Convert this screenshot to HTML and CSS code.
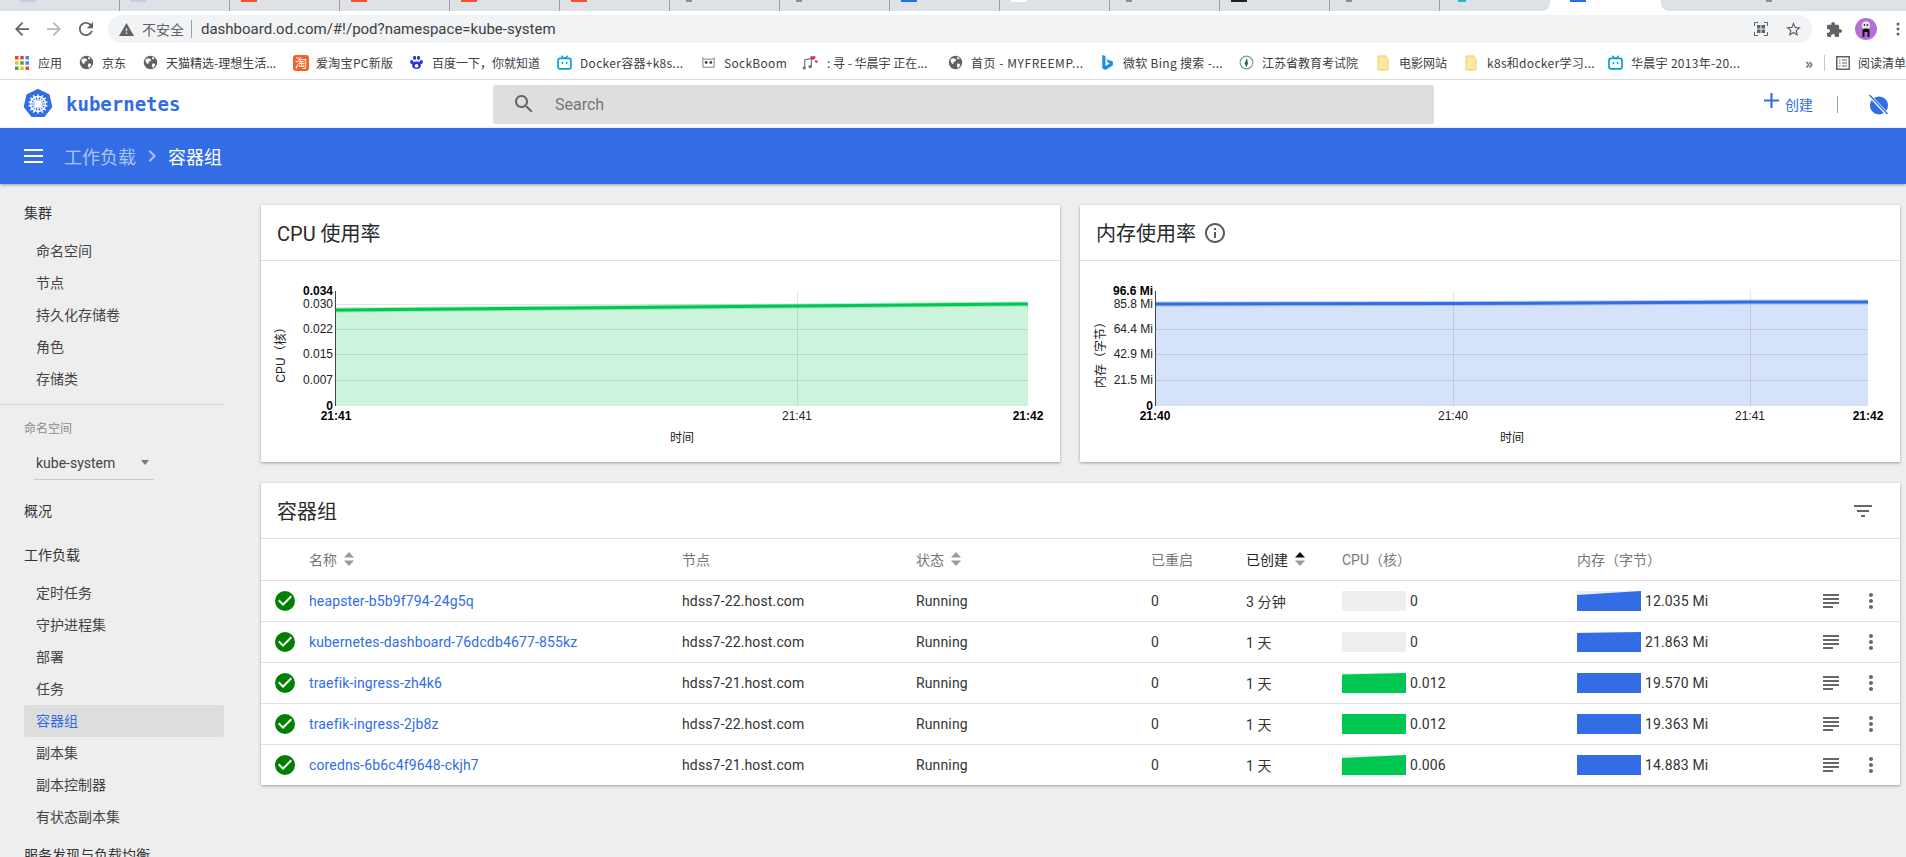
FILE: index.html
```html
<!DOCTYPE html>
<html lang="zh-CN">
<head>
<meta charset="utf-8">
<title>容器组 - Kubernetes Dashboard</title>
<link rel="stylesheet" href="styles.css">
</head>
<body>
<svg class="defs" aria-hidden="true">
  <symbol id="i-globe" viewBox="0 0 16 16"><circle cx="8" cy="8" r="7.2" fill="#5f6368"/><path d="M3 4.2l3-.8 2.6 1-.6 2.2-2 .6-.2 2.4-1.4-.4-1.8-2.6zM9.6 9l2.8.2.8 1.4-1.8 3-1.6-.6z" fill="#fff"/><path d="M10 1.8l2.4 1.6-1.6 1.4-1.2-1z" fill="#fff"/></symbol>
  <symbol id="i-bili" viewBox="0 0 18 18"><path d="M5 1l3 2.6h2L13 1" fill="none" stroke="#00a1d6" stroke-width="1.5"/><rect x="1.2" y="4" width="15.6" height="12.6" rx="2.6" fill="none" stroke="#00a1d6" stroke-width="2"/><rect x="4" y="6.600" width="10" height="7.400" rx=".8" fill="#fff"/><rect x="5.600" y="8.400" width="1.800" height="2.600" fill="#00a1d6"/><rect x="10.600" y="8.400" width="1.800" height="2.600" fill="#00a1d6"/></symbol>
  <symbol id="i-folder" viewBox="0 0 12 16"><path d="M1 1h7.6L11 3.4V15H1z" fill="#fce8a3" stroke="#f2cd5f"/></symbol>
  <symbol id="i-log" viewBox="0 0 24 24"><path d="M14 17H4v2h10v-2zm6-8H4v2h16V9zM4 15h16v-2H4v2zM4 5v2h16V5H4z"/></symbol>
  <symbol id="i-more" viewBox="0 0 24 24"><path d="M12 8c1.1 0 2-.9 2-2s-.9-2-2-2-2 .9-2 2 .9 2 2 2zm0 2c-1.1 0-2 .9-2 2s.9 2 2 2 2-.9 2-2-.9-2-2-2zm0 6c-1.1 0-2 .9-2 2s.9 2 2 2 2-.9 2-2-.9-2-2-2z"/></symbol>
  <symbol id="i-ok" viewBox="0 0 24 24"><circle cx="12" cy="12" r="10" fill="#008000"/><path d="M10 17l-5-5 1.41-1.41L10 14.17l7.59-7.59L19 8z" fill="#fff"/></symbol>
  <symbol id="i-sort" viewBox="0 0 10 14"><path class="sort-up" d="M5 0l5 5.5H0z"/><path class="sort-down" d="M5 14L0 8.500h10z"/></symbol>
</svg>

<div class="page">
  <div class="tabstrip">
    <div class="tab tab-first"><i class="fav fav-lav"></i></div>
    <div class="tab"><i class="fav fav-lav"></i></div>
    <div class="tab"><i class="fav fav-red"></i></div>
    <div class="tab"><i class="fav fav-red"></i></div>
    <div class="tab"><i class="fav fav-red"></i></div>
    <div class="tab"><i class="fav fav-red"></i></div>
    <div class="tab"><i class="fav fav-gray"></i></div>
    <div class="tab"><i class="fav fav-gray"></i></div>
    <div class="tab"><i class="fav fav-blue"></i></div>
    <div class="tab"><i class="fav fav-white"></i></div>
    <div class="tab"><i class="fav fav-gray"></i></div>
    <div class="tab"><i class="fav fav-black"></i></div>
    <div class="tab"><i class="fav fav-gray"></i></div>
    <div class="tab tab-before-active"><i class="fav fav-teal"></i></div>
    <div class="tab-active"><i class="fav fav-blue"></i></div>
    <div class="tab-last"><i class="fav fav-gray"></i></div>
  </div>

  <div class="toolbar">
    <svg class="tb-icon tb-back" viewBox="4 4 16 16"><path d="M20 11H7.830l5.590-5.590L12 4l-8 8 8 8 1.410-1.410L7.830 13H20v-2z"/></svg>
    <svg class="tb-icon tb-forward" viewBox="4 4 16 16"><path d="M12 4l-1.410 1.410L16.170 11H4v2h12.170l-5.580 5.590L12 20l8-8z"/></svg>
    <svg class="tb-icon tb-reload" viewBox="4 4 16 16"><path d="M17.650 6.350C16.200 4.900 14.210 4 12 4c-4.420 0-7.990 3.580-7.990 8s3.570 8 7.990 8c3.730 0 6.840-2.550 7.730-6h-2.080c-.82 2.330-3.040 4-5.650 4-3.310 0-6-2.690-6-6s2.690-6 6-6c1.660 0 3.140.69 4.220 1.780L13 11h7V4l-2.350 2.350z"/></svg>
    <div class="omnibox">
      <svg class="omni-warn" viewBox="1 2 22 19"><path d="M1 21h22L12 2 1 21zm12-3h-2v-2h2v2zm0-4h-2v-4h2v4z"/></svg>
      <span class="omni-state">不安全</span>
      <span class="omni-url">dashboard.od.com/#!/pod?namespace=kube-system</span>
      <svg class="omni-qr" viewBox="0 0 14 14"><path d="M.5 4V.5H4M10 .5h3.500V4M13.500 10v3.500H10M4 13.500H.5V10" fill="none" stroke="#5f6368"/><path d="M3 3h3.500v3.500H3zM7.500 3H11v3.500H7.500zM3 7.500h3.500V11H3zM7.500 7.500H11V11H7.500z" fill="#5f6368"/></svg>
      <svg class="omni-star" viewBox="2 2 20 19"><path d="M22 9.240l-7.190-.62L12 2 9.190 8.630 2 9.240l5.460 4.730L5.820 21 12 17.270 18.180 21l-1.630-7.030L22 9.240zM12 15.400l-3.760 2.270 1-4.280-3.320-2.880 4.380-.38L12 6.100l1.710 4.040 4.380.38-3.320 2.880 1 4.280L12 15.400z"/></svg>
    </div>
    <svg class="tb-puzzle" viewBox="2 1 21 21"><path d="M20.500 11H19V7c0-1.100-.9-2-2-2h-4V3.500C13 2.120 11.880 1 10.500 1S8 2.120 8 3.500V5H4c-1.100 0-1.990.9-1.990 2v3.800H3.500c1.490 0 2.700 1.210 2.700 2.700s-1.210 2.700-2.700 2.700H2V20c0 1.100.9 2 2 2h3.800v-1.500c0-1.490 1.210-2.700 2.700-2.700 1.490 0 2.700 1.210 2.700 2.700V22H17c1.100 0 2-.9 2-2v-4h1.500c1.380 0 2.500-1.120 2.500-2.500S21.880 11 20.500 11z"/></svg>
    <svg class="tb-avatar" viewBox="0 0 22 22"><circle cx="11" cy="11" r="11" fill="#b56fd8"/><circle cx="11" cy="7.500" r="4.200" fill="#e8e8e8"/><circle cx="9.500" cy="7" r=".9" fill="#333"/><circle cx="12.500" cy="7" r=".9" fill="#333"/><path d="M7.500 19v-6.500c0-1.500 1.500-2 3.500-2s3.500.5 3.500 2V19h-2v-5h-3v5z" fill="#111"/></svg>
    <svg class="tb-dots" viewBox="0 0 4 14"><circle cx="2" cy="2" r="1.500"/><circle cx="2" cy="7" r="1.500"/><circle cx="2" cy="12" r="1.500"/></svg>
  </div>

  <div class="bookmarks">
    <span class="bm bm-apps">
      <svg class="bm-ico bm-grid" viewBox="0 0 14 14"><rect width="3.500" height="3.500" fill="#ea4335"/><rect x="5.250" width="3.500" height="3.500" fill="#ea4335"/><rect x="10.500" width="3.500" height="3.500" fill="#4285f4"/><rect y="5.250" width="3.500" height="3.500" fill="#fbbc05"/><rect x="5.250" y="5.250" width="3.500" height="3.500" fill="#34a853"/><rect x="10.500" y="5.250" width="3.500" height="3.500" fill="#4285f4"/><rect y="10.500" width="3.500" height="3.500" fill="#34a853"/><rect x="5.250" y="10.500" width="3.500" height="3.500" fill="#fbbc05"/><rect x="10.500" y="10.500" width="3.500" height="3.500" fill="#ea4335"/></svg>应用</span>
    <span class="bm bm-w1"><svg class="bm-ico"><use href="#i-globe"/></svg>京东</span>
    <span class="bm bm-w2"><svg class="bm-ico"><use href="#i-globe"/></svg>天猫精选-理想生活...</span>
    <span class="bm bm-w3 bm-wide"><span class="bm-tao">淘</span>爱淘宝PC新版</span>
    <span class="bm bm-w4"><svg class="bm-ico" viewBox="0 0 16 16"><ellipse cx="8" cy="11" rx="4.600" ry="4" fill="#2932e1"/><ellipse cx="3" cy="7.500" rx="1.800" ry="2.300" fill="#2932e1"/><ellipse cx="13" cy="7.500" rx="1.800" ry="2.300" fill="#2932e1"/><ellipse cx="6" cy="3" rx="1.700" ry="2.300" fill="#2932e1"/><ellipse cx="10.200" cy="3" rx="1.700" ry="2.300" fill="#2932e1"/><circle cx="8" cy="11.500" r="2" fill="#fff"/></svg>百度一下，你就知道</span>
    <span class="bm bm-w5 bm-wide"><svg class="bm-ico"><use href="#i-bili"/></svg>Docker容器+k8s...</span>
    <span class="bm bm-w6 bm-wide"><svg class="bm-ico" viewBox="0 0 16 16"><path d="M2 3l2 1.500h8L14 3v10H2z" fill="#fff" stroke="#777"/><circle cx="5.500" cy="8" r="1.500" fill="#444"/><circle cx="10.500" cy="8" r="1.500" fill="#444"/></svg>SockBoom</span>
    <span class="bm bm-w7"><svg class="bm-ico bm-music" viewBox="0 0 20 18"><path d="M3 16V6l8-2v10" fill="none" stroke="#777" stroke-width="1.400"/><circle cx="2.500" cy="15.500" r="2" fill="#777"/><circle cx="9.500" cy="14" r="2" fill="#777"/><path d="M13 2c.6-1.400 3-1.200 3 .6 0 1.400-1.800 2.400-3 3.400-1.200-1-3-2-3-3.400 0-1.800 2.400-2 3-.6zM17 7c.4-.8 2-.7 2 .4 0 .9-1.200 1.500-2 2.100-.8-.6-2-1.200-2-2.100 0-1.100 1.600-1.200 2-.4z" fill="#d6247c"/></svg>: 寻 - 华晨宇 正在...</span>
    <span class="bm bm-w8 bm-wider"><svg class="bm-ico"><use href="#i-globe"/></svg>首页 - MYFREEMP...</span>
    <span class="bm bm-w9 bm-wide"><svg class="bm-ico bm-bing" viewBox="0 0 12 18"><path d="M1 1l3.400 1.200v10.600l4.600-2.700-2.300-1.100-1.300-3.400 6.800 2.400v3.800L4.400 17 1 15z" fill="#1b8fe8"/></svg>微软 Bing 搜索 -...</span>
    <span class="bm bm-w10"><svg class="bm-ico" viewBox="0 0 16 16"><circle cx="8" cy="8" r="6.800" fill="#fff" stroke="#7a9c8c" stroke-width="1.200"/><path d="M8.500 3L6 9l2 4 1.500-4z" fill="#1e6b3a"/></svg>江苏省教育考试院</span>
    <span class="bm bm-w11"><svg class="bm-ico bm-folder"><use href="#i-folder"/></svg>电影网站</span>
    <span class="bm bm-w12 bm-wide"><svg class="bm-ico bm-folder"><use href="#i-folder"/></svg>k8s和docker学习...</span>
    <span class="bm bm-w13 bm-wide"><svg class="bm-ico"><use href="#i-bili"/></svg>华晨宇 2013年-20...</span>
    <span class="bm-more">»</span>
    <span class="bm-sep"></span>
    <span class="bm bm-read"><svg class="bm-ico" viewBox="0 0 14 14"><rect x=".75" y=".75" width="12.500" height="12.500" fill="none" stroke="#5f6368" stroke-width="1.500"/><path d="M3 4h1.500M6 4h5M3 7h1.500M6 7h5M3 10h1.500M6 10h5" stroke="#5f6368" stroke-width="1.200"/></svg>阅读清单</span>
  </div>

  <header class="app-header">
    <div class="brand">
      <svg class="brand-logo" viewBox="0 0 32 32">
        <path d="M16 .8l11.600 5.600 2.900 12.600-8 10.100H9.500l-8-10.100L4.400 6.400z" fill="#326de6" stroke="#326de6" stroke-width="1.500" stroke-linejoin="round"/>
        <g fill="none" stroke="#fff" stroke-width="1.500">
          <circle cx="16" cy="16" r="8"/>
          <path d="M16 5.500v21M7.800 9.500l16.400 13M5.800 18.300l20.400-4.600M10.900 25.300l10.200-18.600M21.100 25.300L10.900 6.700M26.200 18.300L5.800 13.700M24.200 9.500L7.800 22.500"/>
        </g>
        <circle cx="16" cy="16" r="2.400" fill="#fff"/>
      </svg>
      <span class="brand-name">kubernetes</span>
    </div>
    <div class="search">
      <svg class="search-icon" viewBox="3 3 18 18"><path d="M15.500 14h-.79l-.28-.27C15.410 12.590 16 11.110 16 9.500 16 5.910 13.090 3 9.500 3S3 5.910 3 9.500 5.910 16 9.500 16c1.610 0 3.090-.59 4.230-1.570l.27.28v.79l5 4.990L20.490 19l-4.990-5zm-6 0C7.010 14 5 11.990 5 9.500S7.010 5 9.500 5 14 7.010 14 9.500 11.990 14 9.500 14z"/></svg>
      <span class="search-text">Search</span>
    </div>
    <div class="header-actions">
      <svg class="plus" viewBox="5 5 14 14"><path d="M19 13h-6v6h-2v-6H5v-2h6V5h2v6h6v2z"/></svg>
      <span class="create">创建</span>
      <span class="action-sep"></span>
      <svg class="user-off" viewBox="0 0 22 22"><circle cx="11.500" cy="12" r="9.500" fill="#326de6"/><path d="M3 3l17 18" stroke="#fff" stroke-width="3.500"/><path d="M1.500 1l19 20" stroke="#326de6" stroke-width="1.400"/></svg>
    </div>
  </header>

  <div class="appbar">
    <svg class="menu" viewBox="0 0 19 14"><path d="M0 0h19v2H0zM0 6h19v2H0zM0 12h19v2H0z"/></svg>
    <span class="crumb">工作负载</span>
    <svg class="crumb-sep" viewBox="8 6 8 12"><path d="M10 6L8.590 7.410 13.170 12l-4.580 4.590L10 18l6-6z"/></svg>
    <span class="crumb-now">容器组</span>
  </div>

  <div class="workspace">
    <nav class="sidebar">
      <div class="nav-title nav-title-group">集群</div>
      <a class="nav-item">命名空间</a>
      <a class="nav-item">节点</a>
      <a class="nav-item">持久化存储卷</a>
      <a class="nav-item">角色</a>
      <a class="nav-item">存储类</a>
      <div class="nav-divider"></div>
      <div class="nav-label">命名空间</div>
      <div class="ns-select"><span>kube-system</span><i class="ns-arrow"></i></div>
      <div class="nav-title nav-title-overview">概况</div>
      <div class="nav-title nav-title-workload">工作负载</div>
      <a class="nav-item">定时任务</a>
      <a class="nav-item">守护进程集</a>
      <a class="nav-item">部署</a>
      <a class="nav-item">任务</a>
      <a class="nav-item nav-item-active">容器组</a>
      <a class="nav-item">副本集</a>
      <a class="nav-item">副本控制器</a>
      <a class="nav-item">有状态副本集</a>
      <div class="nav-title nav-title-service">服务发现与负载均衡</div>
    </nav>

    <main class="content">
      <section class="card card-chart">
        <div class="card-head"><h2 class="card-title">CPU 使用率</h2></div>
        <svg class="chart" width="799" height="201" viewBox="0 0 799 201">
          <polygon class="area-green" points="75,49 536,45 767,43 767,145 75,145"/>
          <path class="grid" d="M75 43.500H767M75 68.500H767M75 93.500H767M75 119.500H767M536.500 30V145"/>
          <polyline class="line-halo-green" points="75,49 536,45 767,43"/>
          <polyline class="line-green" points="75,49 536,45 767,43"/>
          <path class="axis" d="M74.500 30V145"/>
          <text class="tick-y tick-strong" x="72" y="34">0.034</text>
          <text class="tick-y" x="72" y="47">0.030</text>
          <text class="tick-y" x="72" y="72">0.022</text>
          <text class="tick-y" x="72" y="97">0.015</text>
          <text class="tick-y" x="72" y="123">0.007</text>
          <text class="tick-y tick-strong" x="72" y="149">0</text>
          <text class="tick-x tick-strong" x="75" y="159">21:41</text>
          <text class="tick-x" x="536" y="159">21:41</text>
          <text class="tick-x tick-strong" x="767" y="159">21:42</text>
          <text class="axis-label" x="421" y="181">时间</text>
          <text class="axis-label" transform="translate(24 91) rotate(-90)">CPU（核）</text>
        </svg>
      </section>

      <section class="card card-chart">
        <div class="card-head"><h2 class="card-title">内存使用率</h2>
          <svg class="info" viewBox="0 0 24 24"><path d="M11 7h2v2h-2zm0 4h2v6h-2zm1-9C6.480 2 2 6.480 2 12s4.480 10 10 10 10-4.480 10-10S17.520 2 12 2zm0 18c-4.410 0-8-3.590-8-8s3.590-8 8-8 8 3.590 8 8-3.590 8-8 8z"/></svg>
        </div>
        <svg class="chart" width="820" height="201" viewBox="0 0 820 201">
          <polygon class="area-blue" points="76,43 373,42.500 670,41 788,41 788,145 76,145"/>
          <path class="grid" d="M76 68.500H788M76 93.500H788M76 119.500H788M373.500 30V145M670.500 30V145"/>
          <polyline class="line-halo-blue" points="76,43 373,42.500 670,41 788,41"/>
          <polyline class="line-blue" points="76,43 373,42.500 670,41 788,41"/>
          <path class="axis" d="M75.500 30V145"/>
          <text class="tick-y tick-strong" x="73" y="34">96.6 Mi</text>
          <text class="tick-y" x="73" y="47">85.8 Mi</text>
          <text class="tick-y" x="73" y="72">64.4 Mi</text>
          <text class="tick-y" x="73" y="97">42.9 Mi</text>
          <text class="tick-y" x="73" y="123">21.5 Mi</text>
          <text class="tick-y tick-strong" x="73" y="149">0</text>
          <text class="tick-x tick-strong" x="75" y="159">21:40</text>
          <text class="tick-x" x="373" y="159">21:40</text>
          <text class="tick-x" x="670" y="159">21:41</text>
          <text class="tick-x tick-strong" x="788" y="159">21:42</text>
          <text class="axis-label" x="432" y="181">时间</text>
          <text class="axis-label" transform="translate(25 91) rotate(-90)">内存（字节）</text>
        </svg>
      </section>

      <section class="card card-table">
        <div class="card-head card-head-table">
          <h2 class="card-title">容器组</h2>
          <svg class="filter" viewBox="0 0 24 24"><path d="M10 18h4v-2h-4v2zM3 6v2h18V6H3zm3 7h12v-2H6v2z"/></svg>
        </div>
        <table class="pods">
          <colgroup>
            <col class="c-check"><col class="c-name"><col class="c-node"><col class="c-status"><col class="c-restart"><col class="c-created"><col class="c-cpu"><col class="c-mem"><col class="c-log"><col class="c-more">
          </colgroup>
          <thead>
            <tr>
              <th></th>
              <th><span class="th-sort">名称<svg class="sort"><use href="#i-sort"/></svg></span></th>
              <th>节点</th>
              <th><span class="th-sort">状态<svg class="sort"><use href="#i-sort"/></svg></span></th>
              <th>已重启</th>
              <th class="th-active"><span class="th-sort">已创建<svg class="sort sort-active"><use href="#i-sort"/></svg></span></th>
              <th>CPU（核）</th>
              <th>内存（字节）</th>
              <th></th>
              <th></th>
            </tr>
          </thead>
          <tbody>
            <tr>
              <td><svg class="ok"><use href="#i-ok"/></svg></td>
              <td><a class="pod-link">heapster-b5b9f794-24g5q</a></td>
              <td>hdss7-22.host.com</td><td>Running</td><td>0</td><td>3 分钟</td>
              <td><div class="metric"><svg class="spark" viewBox="0 0 64 20"></svg>0</div></td>
              <td><div class="metric"><svg class="spark" viewBox="0 0 64 20"><polygon class="spark-blue" points="0,4 64,0 64,20 0,20"/></svg>12.035 Mi</div></td>
              <td><svg class="act"><use href="#i-log"/></svg></td><td><svg class="act"><use href="#i-more"/></svg></td>
            </tr>
            <tr>
              <td><svg class="ok"><use href="#i-ok"/></svg></td>
              <td><a class="pod-link">kubernetes-dashboard-76dcdb4677-855kz</a></td>
              <td>hdss7-22.host.com</td><td>Running</td><td>0</td><td class="age-old">1 天</td>
              <td><div class="metric"><svg class="spark" viewBox="0 0 64 20"></svg>0</div></td>
              <td><div class="metric"><svg class="spark" viewBox="0 0 64 20"><polygon class="spark-blue" points="0,1 64,0 64,20 0,20"/></svg>21.863 Mi</div></td>
              <td><svg class="act"><use href="#i-log"/></svg></td><td><svg class="act"><use href="#i-more"/></svg></td>
            </tr>
            <tr>
              <td><svg class="ok"><use href="#i-ok"/></svg></td>
              <td><a class="pod-link">traefik-ingress-zh4k6</a></td>
              <td>hdss7-21.host.com</td><td>Running</td><td>0</td><td class="age-old">1 天</td>
              <td><div class="metric"><svg class="spark" viewBox="0 0 64 20"><polygon class="spark-green" points="0,1.500 64,0 64,20 0,20"/></svg>0.012</div></td>
              <td><div class="metric"><svg class="spark" viewBox="0 0 64 20"><polygon class="spark-blue" points="0,0 64,0 64,20 0,20"/></svg>19.570 Mi</div></td>
              <td><svg class="act"><use href="#i-log"/></svg></td><td><svg class="act"><use href="#i-more"/></svg></td>
            </tr>
            <tr>
              <td><svg class="ok"><use href="#i-ok"/></svg></td>
              <td><a class="pod-link">traefik-ingress-2jb8z</a></td>
              <td>hdss7-22.host.com</td><td>Running</td><td>0</td><td class="age-old">1 天</td>
              <td><div class="metric"><svg class="spark" viewBox="0 0 64 20"><polygon class="spark-green" points="0,0 64,0 64,20 0,20"/></svg>0.012</div></td>
              <td><div class="metric"><svg class="spark" viewBox="0 0 64 20"><polygon class="spark-blue" points="0,0 64,0 64,20 0,20"/></svg>19.363 Mi</div></td>
              <td><svg class="act"><use href="#i-log"/></svg></td><td><svg class="act"><use href="#i-more"/></svg></td>
            </tr>
            <tr>
              <td><svg class="ok"><use href="#i-ok"/></svg></td>
              <td><a class="pod-link">coredns-6b6c4f9648-ckjh7</a></td>
              <td>hdss7-21.host.com</td><td>Running</td><td>0</td><td class="age-old">1 天</td>
              <td><div class="metric"><svg class="spark" viewBox="0 0 64 20"><polygon class="spark-green" points="0,3 64,0 64,20 0,20"/></svg>0.006</div></td>
              <td><div class="metric"><svg class="spark" viewBox="0 0 64 20"><polygon class="spark-blue" points="0,0 64,0 64,20 0,20"/></svg>14.883 Mi</div></td>
              <td><svg class="act"><use href="#i-log"/></svg></td><td><svg class="act"><use href="#i-more"/></svg></td>
            </tr>
          </tbody>
        </table>
      </section>
    </main>
  </div>
</div>
</body>
</html>
```
FILE: styles.css
```css
* { box-sizing: border-box; }
html, body { margin: 0; height: 100%; overflow: hidden; }
body { font-family: Roboto, "Noto Sans CJK SC", sans-serif; color: #333; background: #eee; }
.defs { position: absolute; width: 0; height: 0; }
.page { height: 857px; display: flex; flex-direction: column; overflow: hidden; }

/* browser tab strip */
.tabstrip { height: 11px; flex: none; display: flex; background: #fff; overflow: hidden; }
.tab { width: 110px; flex: none; background: #dee1e6; border-right: 1px solid #9aa0a6; padding-left: 11px; }
.tab-first { width: 120px; padding-left: 20px; }
.tab-before-active { border-right: 0; border-bottom-right-radius: 8px; width: 110px; padding-left: 18px; }
.tab-active { width: 111px; flex: none; background: #fff; padding-left: 20px; }
.tab-last { flex: 1; background: #dee1e6; border-bottom-left-radius: 8px; padding-left: 100px; }
.fav { display: block; width: 16px; height: 2px; }
.fav-lav { background: #c8c9ee; }
.fav-red { background: #f4502a; }
.fav-gray { background: #8a8d91; width: 6px; margin-left: 5px; }
.fav-blue { background: #1a73e8; }
.fav-white { background: #fff; }
.fav-black { background: #202124; }
.fav-teal { background: #2ab4c8; width: 8px; }

/* browser toolbar */
.toolbar { height: 35px; flex: none; background: #fff; display: flex; align-items: center; padding: 4px 0 3px 15px; }
.toolbar svg { flex: none; }
.tb-icon { width: 14px; height: 14px; fill: #5f6368; }
.tb-forward { fill: #b4b7bb; margin-left: 18px; }
.tb-reload { margin-left: 18px; }
.omnibox { width: 1704px; height: 28px; margin-left: 15px; flex: none; border-radius: 14px; background: #f1f3f4; display: flex; align-items: center; padding-left: 11px; font-family: "Noto Sans CJK SC", sans-serif; }
.omni-warn { width: 15px; height: 13px; fill: #5f6368; }
.omni-state { font-size: 14px; color: #5f6368; margin-left: 8px; padding-right: 7px; border-right: 1px solid #9aa0a6; height: 18px; line-height: 18px; }
.omni-url { font-family: Roboto, sans-serif; font-size: 15px; color: #3c4043; margin-left: 9px; flex: 1; }
.omni-qr { width: 14px; height: 14px; }
.omni-star { width: 15px; height: 14px; fill: #5f6368; margin: 0 11px 0 18px; }
.tb-puzzle { width: 15px; height: 15px; fill: #5f6368; margin-left: 15px; }
.tb-avatar { width: 22px; height: 22px; margin-left: 13px; }
.tb-dots { width: 4px; height: 14px; fill: #5f6368; margin-left: 19px; }

/* bookmarks bar */
.bookmarks { height: 34px; flex: none; background: #fff; border-bottom: 1px solid #dadce0; display: flex; align-items: center; padding-left: 15px; font-family: "Noto Sans CJK SC", sans-serif; font-size: 12px; color: #3c4043; white-space: nowrap; overflow: hidden; }
.bm { display: flex; align-items: center; flex: none; }
.bm-wide { letter-spacing: .3px; }
.bm-wider { letter-spacing: .55px; }
.bm-ico { width: 15px; height: 15px; margin-right: 8px; flex: none; }
.bm-grid { width: 14px; height: 14px; margin-right: 9px; }
.bm-music { width: 19px; margin-right: 7px; }
.bm-bing { width: 12px; height: 17px; margin-right: 10px; }
.bm-folder { width: 12px; height: 16px; margin-right: 10px; }
.bm-tao { width: 16px; height: 16px; margin-right: 7px; border-radius: 3px; background: #f4622a; color: #fff; font-size: 12px; line-height: 16px; text-align: center; flex: none; letter-spacing: 0; }
.bm-apps { width: 64px; }
.bm-w1 { width: 64px; }
.bm-w2 { width: 150px; }
.bm-w3 { width: 116px; }
.bm-w4 { width: 148px; }
.bm-w5 { width: 144px; }
.bm-w6 { width: 100px; }
.bm-w7 { width: 147px; }
.bm-w8 { width: 153px; }
.bm-w9 { width: 138px; }
.bm-w10 { width: 138px; }
.bm-w11 { width: 88px; }
.bm-w12 { width: 143px; }
.bm-w13 { width: 197px; }
.bm-more { font-size: 15px; font-weight: 700; color: #5f6368; width: 19px; flex: none; }
.bm-sep { width: 1px; height: 16px; background: #c6c8cb; flex: none; margin-right: 11px; }
.bm-read .bm-ico { width: 14px; height: 14px; }

/* dashboard header */
.app-header { height: 48px; flex: none; background: #fff; display: grid; grid-template-columns: 493px 941px 1fr; align-items: center; }
.brand { display: flex; align-items: center; padding-left: 23px; }
.brand-logo { width: 30px; height: 30px; }
.brand-name { font-family: "DejaVu Sans Mono", monospace; font-weight: 700; font-size: 19px; color: #326de6; margin-left: 13px; }
.search { height: 39px; background: #dedede; border-radius: 2px; display: flex; align-items: center; padding-left: 22px; }
.search-icon { width: 18px; height: 18px; fill: #666; }
.search-text { font-size: 16px; color: #777; margin-left: 22px; }
.header-actions { display: flex; align-items: center; justify-content: flex-end; padding-right: 17px; }
.plus { width: 15px; height: 15px; fill: #326de6; margin-bottom: 8px; }
.create { font-size: 14px; color: #326de6; margin-left: 6px; }
.action-sep { width: 1px; height: 17px; background: #8c9fe8; margin: 0 30px 0 24px; }
.user-off { width: 21px; height: 21px; }

/* blue app bar */
.appbar { position: relative; z-index: 2; height: 56px; flex: none; background: #326de6; box-shadow: 0 1px 3px rgba(0,0,0,.35); display: flex; align-items: center; padding-left: 24px; font-size: 18px; }
.menu { width: 19px; height: 14px; fill: #fff; }
.crumb { color: rgba(255,255,255,.6); margin-left: 21px; }
.crumb-sep { width: 8px; height: 12px; fill: rgba(255,255,255,.6); margin: 0 12px; }
.crumb-now { color: #fff; }

/* page body */
.workspace { flex: 1; min-height: 0; display: flex; }
.sidebar { width: 224px; flex: none; padding-top: 13px; font-size: 14px; overflow: hidden; }
.nav-title { height: 32px; line-height: 32px; padding-left: 24px; color: #333; white-space: nowrap; }
.nav-title-group, .nav-title-workload { margin-bottom: 6px; }
.nav-title-overview { margin-top: 15px; }
.nav-title-workload { margin-top: 12px; }
.nav-title-service { margin-top: 6px; }
.nav-item { display: block; height: 32px; line-height: 32px; margin-left: 24px; padding-left: 12px; color: #444; border-radius: 2px; }
.nav-item-active { background: #ddd; color: #326de6; }
.nav-divider { height: 1px; background: #d4d4d4; margin-top: 9px; }
.nav-label { height: 32px; line-height: 32px; margin-top: 8px; padding-left: 24px; font-size: 12px; color: #8a8a8a; }
.ns-select { width: 120px; height: 34px; margin: 1px 0 0 34px; padding: 0 5px 0 2px; border-bottom: 1px solid #ccc; display: flex; align-items: center; justify-content: space-between; color: #444; }
.ns-arrow { width: 0; height: 0; border: 4px solid transparent; border-top: 5px solid #777; border-bottom: 0; margin-right: 0; }

.content { flex: 1; min-width: 0; padding: 21px 6px 0 37px; display: grid; grid-template-columns: 799px 820px; grid-template-rows: 257px auto; column-gap: 20px; row-gap: 21px; align-content: start; }
.card { background: #fff; box-shadow: 0 1px 3px rgba(0,0,0,.35); border-radius: 1px; }
.card-table { grid-column: 1 / 3; }
.card-head { height: 56px; padding: 0 16px; border-bottom: 1px solid #e0e0e0; display: flex; align-items: center; }
.card-title { margin: 0; font-size: 20px; font-weight: 400; color: #2a2a2a; }
.info { width: 24px; height: 24px; fill: #5a5a5a; margin-left: 7px; }
.filter { width: 24px; height: 24px; fill: #666; margin-left: auto; margin-right: 9px; }
.chart { display: block; }

/* charts */
.grid { fill: none; stroke: rgba(0,0,0,.1); stroke-width: 1; }
.axis { fill: none; stroke: #444; stroke-width: 1; }
.area-green { fill: #00c752; fill-opacity: .2; }
.area-blue { fill: #326de6; fill-opacity: .2; }
.line-green { fill: none; stroke: #00c752; stroke-width: 3; }
.line-blue { fill: none; stroke: #326de6; stroke-width: 3; }
.line-halo-green { fill: none; stroke: #00c752; stroke-opacity: .3; stroke-width: 5; }
.line-halo-blue { fill: none; stroke: #326de6; stroke-opacity: .3; stroke-width: 5; }
.tick-y, .tick-x, .axis-label { font-family: "Liberation Sans", "Noto Sans CJK SC", sans-serif; font-size: 12px; fill: #222; text-anchor: end; }
.tick-x, .axis-label { text-anchor: middle; }
.tick-strong { font-weight: 700; fill: #000; }

/* table */
.pods { width: 100%; border-collapse: collapse; table-layout: fixed; font-size: 14px; }
.c-check { width: 48px; } .c-name { width: 373px; } .c-node { width: 234px; } .c-status { width: 235px; } .c-restart { width: 95px; } .c-created { width: 96px; } .c-cpu { width: 235px; } .c-mem { width: 242px; } .c-log { width: 40px; } .c-more { width: 41px; }
.pods tr { height: 41px; border-bottom: 1px solid #e0e0e0; }
.pods tbody tr:last-child { border-bottom: 0; }
.pods th, .pods td { padding: 0; text-align: left; vertical-align: middle; white-space: nowrap; }
.pods th { font-weight: 400; color: #777; }
.pods td { color: #333; letter-spacing: .14px; }
.pods .th-active { color: #222; }
.th-sort { display: inline-flex; align-items: center; }
.sort { width: 10px; height: 14px; margin-left: 7px; color: #999; }
.sort-up { fill: currentColor; }
.sort-down { fill: #999; }
.sort-active { color: #111; }
.ok { display: block; width: 24px; height: 24px; margin-left: 12px; }
.pod-link { color: #326de6; }
.metric { display: flex; align-items: center; gap: 4px; }
.spark { width: 64px; height: 20px; background: #eee; flex: none; }
.spark-blue { fill: #326de6; }
.spark-green { fill: #00c752; }
.act { display: block; width: 24px; height: 24px; fill: #666; }
.age-old { color: #3a2a2a; }
```
